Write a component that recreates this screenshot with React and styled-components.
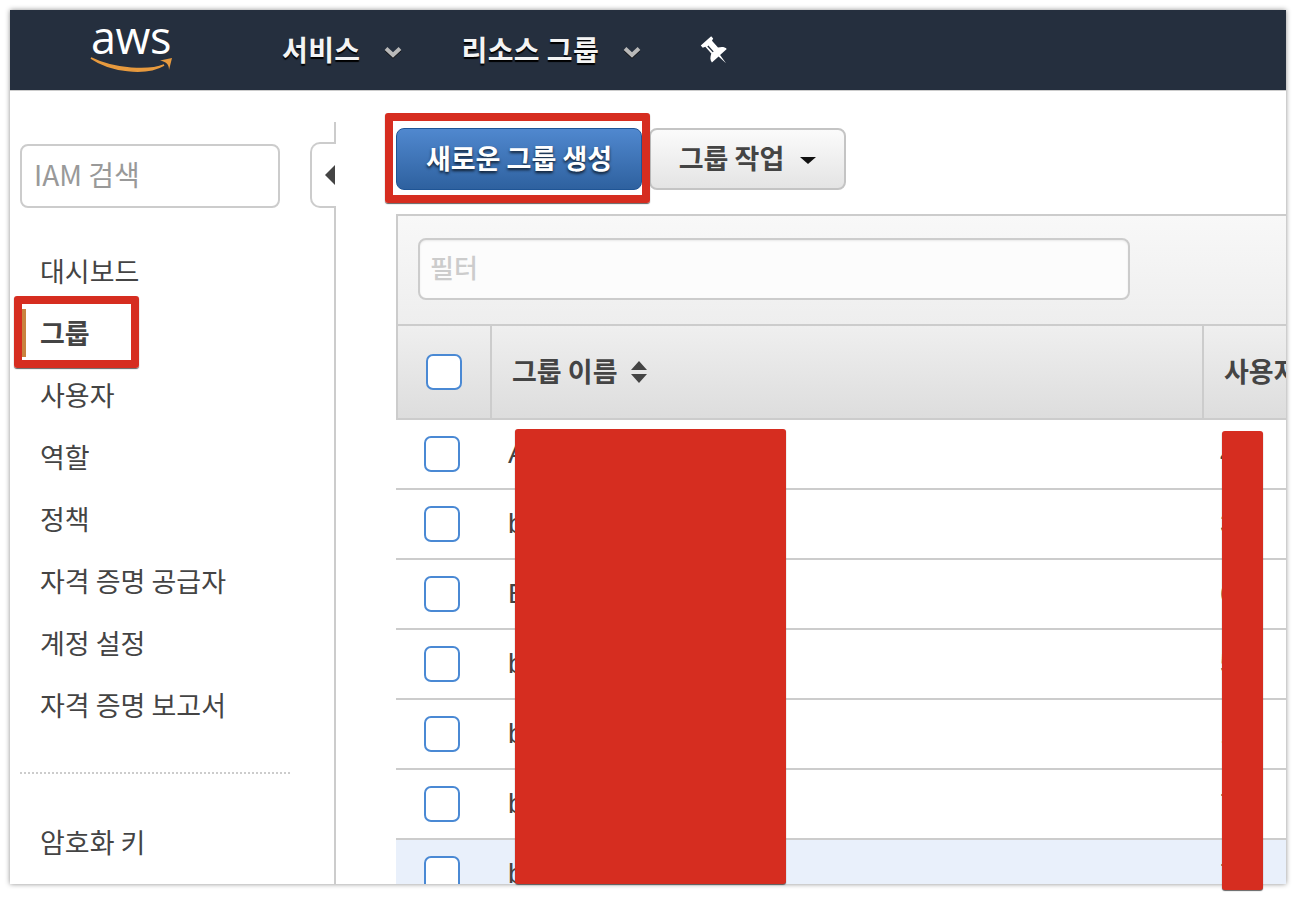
import React from 'react';
import styled, { createGlobalStyle } from 'styled-components';

const GlobalStyle = createGlobalStyle`
  html, body {
    margin: 0;
    background: #fff;
    font-family: "Noto Sans CJK KR", "Liberation Sans", sans-serif;
    color: #444;
  }
  * { box-sizing: border-box; }
`;

const Stage = styled.div`
  position: relative;
  width: 1296px;
  height: 904px;
  padding: 10px;
  overflow: hidden;
`;

const Frame = styled.div`
  width: 1276px;
  height: 874px;
  overflow: hidden;
  display: flex;
  flex-direction: column;
  background: #fff;
  box-shadow: 0 0 5px rgba(0, 0, 0, 0.45);
`;

const TopBar = styled.header`
  flex: none;
  height: 81px;
  display: flex;
  align-items: center;
  background: #252f3e;
  border-bottom: 1px solid #ccc;
`;

const Logo = styled.div`
  width: 272px;
  padding-left: 80px;
  display: flex;
  flex-direction: column;
  height: 80px;
`;

const LogoWord = styled.span`
  font-family: "Open Sans", sans-serif;
  font-size: 45px;
  line-height: 36px;
  margin-top: 9px;
  margin-left: 1px;
  letter-spacing: -0.5px;
  color: #fff;
`;

const NavItem = styled.div`
  display: flex;
  align-items: center;
  gap: 24px;
  margin-right: ${p => p.$gap}px;
  padding-bottom: 2px;
  font-size: 28px;
  font-weight: 700;
  letter-spacing: 0.4px;
  color: #f4f4f4;
  text-shadow: 0 2px 1px #000;
`;

const Chevron = styled.svg`
  width: 18px;
  height: 12px;
  margin-top: 5px;
  filter: drop-shadow(0 1px 0 #111);
`;

const Pin = styled.svg`
  width: 30px;
  height: 32px;
  margin-top: 3px;
  transform: rotate(-42deg);
`;

const Body = styled.div`
  flex: 1;
  min-height: 0;
  display: flex;
`;

const Sidebar = styled.aside`
  position: relative;
  flex: none;
  width: 326px;
  padding: 53px 0 0 10px;
  &::after {
    content: '';
    position: absolute;
    top: 31px;
    bottom: 0;
    right: 0;
    width: 2px;
    background: #ccc;
  }
`;

const Search = styled.div`
  width: 260px;
  height: 64px;
  margin-bottom: 32px;
  padding: 0 0 4px 12px;
  display: flex;
  align-items: center;
  border: 2px solid #ccc;
  border-radius: 8px;
  font-size: 28px;
  color: #999;
`;

const CollapseTab = styled.div`
  position: absolute;
  z-index: 1;
  top: 51px;
  right: 0;
  width: 26px;
  height: 66px;
  padding-left: 13px;
  display: flex;
  align-items: center;
  background: #fff;
  border: 2px solid #ccc;
  border-right: 0;
  border-radius: 10px 0 0 10px;
  &::before {
    content: '';
    border-style: solid;
    border-width: 10px 10px 10px 0;
    border-color: transparent #444 transparent transparent;
  }
`;

const NavList = styled.nav`
  display: flex;
  flex-direction: column;
`;

const SideItem = styled.div`
  height: 62px;
  padding: 0 0 1px 20px;
  display: flex;
  align-items: center;
  font-size: 27px;
  font-weight: ${p => (p.$active ? 700 : 400)};
  color: #444;
  position: relative;
  &::before {
    content: ${p => (p.$active ? "''" : 'none')};
    position: absolute;
    left: 2px;
    top: 7px;
    width: 4px;
    height: 48px;
    background: #c9833f;
  }
`;

const Divider = styled.div`
  width: 270px;
  margin: 36px 0 37px;
  border-top: 2px dotted #ccc;
`;

const Main = styled.main`
  flex: 1;
  min-width: 0;
  padding: 37px 0 0 60px;
`;

const Toolbar = styled.div`
  display: flex;
  gap: 7px;
  margin-bottom: 24px;
`;

const PrimaryButton = styled.div`
  width: 246px;
  height: 62px;
  padding-bottom: 4px;
  display: flex;
  align-items: center;
  justify-content: center;
  border: 1px solid #1f5596;
  border-radius: 8px;
  background: linear-gradient(#5088cf, #2e619f);
  color: #fff;
  font-size: 27px;
  font-weight: 700;
  text-shadow: 0 2px 3px rgba(0, 0, 0, 0.75);
`;

const ActionButton = styled.div`
  width: 197px;
  height: 62px;
  padding-bottom: 4px;
  display: flex;
  align-items: center;
  justify-content: center;
  gap: 16px;
  border: 2px solid #c4c4c4;
  border-radius: 8px;
  background: linear-gradient(#fbfbfb, #e4e4e4);
  color: #444;
  font-size: 27px;
  font-weight: 700;
  &::after {
    content: '';
    margin-top: 6px;
    border-style: solid;
    border-width: 7px 8px 0;
    border-color: #111 transparent transparent;
  }
`;

const Table = styled.section`
  border-top: 2px solid #ccc;
  border-left: 2px solid #ccc;
`;

const FilterBar = styled.div`
  height: 108px;
  padding: 22px 0 0 20px;
  background: linear-gradient(#f8f8f8, #eee);
`;

const FilterInput = styled.div`
  width: 712px;
  height: 62px;
  padding: 0 0 6px 10px;
  display: flex;
  align-items: center;
  background: #fcfcfc;
  border: 2px solid #ccc;
  border-radius: 8px;
  box-shadow: inset 0 1px 2px rgba(0, 0, 0, 0.08);
  font-size: 26px;
  font-weight: 500;
  color: #ccc;
`;

const HeadRow = styled.div`
  height: 96px;
  display: grid;
  grid-template-columns: 94px 712px 1fr;
  border-top: 2px solid #ccc;
  border-bottom: 2px solid #ccc;
  background: linear-gradient(#efefef, #ddd);
`;

const HeadCell = styled.div`
  display: flex;
  align-items: center;
  gap: 12px;
  padding: 0 0 3px 20px;
  border-right: ${p => (p.$last ? '0' : '2px solid #ccc')};
  font-size: 27px;
  font-weight: 700;
  color: #444;
  white-space: nowrap;
  overflow: hidden;
`;

const HeadCheckCell = styled(HeadCell)`
  padding: 0 0 0 28px;
`;

const Check = styled.span`
  flex: none;
  display: block;
  width: 36px;
  height: 36px;
  background: #fff;
  border: 2px solid #4a89d4;
  border-radius: 7px;
`;

const SortIcon = styled.svg`
  width: 18px;
  height: 24px;
  margin-top: 3px;
`;

const Row = styled.div`
  margin-left: -2px;
  height: 70px;
  display: grid;
  grid-template-columns: 112px 712px 1fr;
  align-items: center;
  border-bottom: 2px solid #ccc;
  background: ${p => (p.$selected ? '#e9f0fb' : '#fff')};
  font-family: "Liberation Sans", sans-serif;
  font-size: 28px;
  color: #444;
`;

const RowCheck = styled.div`
  padding-left: 28px;
`;

const Annotation = styled.div`
  position: absolute;
  left: ${p => p.$x}px;
  top: ${p => p.$y}px;
  width: ${p => p.$w}px;
  height: ${p => p.$h}px;
  border: 8px solid #d62d20;
  border-radius: 3px;
  box-shadow: 0 1px 1px rgba(60, 60, 60, 0.8);
`;

const Redaction = styled.div`
  position: absolute;
  left: ${p => p.$x}px;
  top: ${p => p.$y}px;
  width: ${p => p.$w}px;
  height: ${p => p.$h}px;
  background: #d62d20;
  border-radius: 3px;
  box-shadow: 0 1px 1px rgba(60, 60, 60, 0.8);
`;

const sideItems = ['대시보드', '그룹', '사용자', '역할', '정책', '자격 증명 공급자', '계정 설정', '자격 증명 보고서'];

const rows = [
  ['A', '4'],
  ['b', '3'],
  ['E', '6'],
  ['b', '5'],
  ['b', '1'],
  ['b', '7'],
  ['b', '7'],
];

const ChevronIcon = () => (
  <Chevron viewBox="0 0 18 12">
    <path d="M2 2.5 L9 9 L16 2.5" fill="none" stroke="#b9b9b9" strokeWidth="4" />
  </Chevron>
);

export default function App() {
  return (
    <Stage>
      <GlobalStyle />
      <Frame>
        <TopBar>
          <Logo>
            <LogoWord>aws</LogoWord>
            <svg width="84" height="20" viewBox="0 0 84 20">
              <path d="M1 3 C20 16 55 21 74 10 C60 16 25 15 1 3 Z" fill="#e79a3e" stroke="#e79a3e" strokeWidth="1.6" />
              <path d="M70 5.5 L82 3 L79 15 C79 9 76 7 70 5.5 Z" fill="#e79a3e" />
            </svg>
          </Logo>
          <NavItem $gap={59}>서비스<ChevronIcon /></NavItem>
          <NavItem $gap={60}>리소스 그룹<ChevronIcon /></NavItem>
          <Pin viewBox="0 0 30 32">
            <path d="M8 1 H22 V4 L19.5 5 V14 C23 16 25 18 25 21 H16 L15 31 L14 21 H5 C5 18 7 16 10.5 14 V5 L8 4 Z" fill="#fff" />
            <path d="M13 6 V14" stroke="#252f3e" strokeWidth="1.4" />
          </Pin>
        </TopBar>
        <Body>
          <Sidebar>
            <CollapseTab />
            <Search>IAM 검색</Search>
            <NavList>
              {sideItems.map(item => (
                <SideItem key={item} $active={item === '그룹'}>{item}</SideItem>
              ))}
            </NavList>
            <Divider />
            <SideItem>암호화 키</SideItem>
          </Sidebar>
          <Main>
            <Toolbar>
              <PrimaryButton>새로운 그룹 생성</PrimaryButton>
              <ActionButton>그룹 작업</ActionButton>
            </Toolbar>
            <Table>
              <FilterBar>
                <FilterInput>필터</FilterInput>
              </FilterBar>
              <HeadRow>
                <HeadCheckCell><Check /></HeadCheckCell>
                <HeadCell>
                  그룹 이름
                  <SortIcon viewBox="0 0 18 24">
                    <path d="M9 1 L17 10 H1 Z M9 23 L1 14 H17 Z" fill="#444" />
                  </SortIcon>
                </HeadCell>
                <HeadCell $last>사용자</HeadCell>
              </HeadRow>
              {rows.map(([name, count], i) => (
                <Row key={i} $selected={i === rows.length - 1}>
                  <RowCheck><Check /></RowCheck>
                  <span>{name}</span>
                  <span>{count}</span>
                </Row>
              ))}
            </Table>
          </Main>
        </Body>
      </Frame>
      <Annotation $x={385} $y={113} $w={265} $h={90} />
      <Annotation $x={14} $y={296} $w={125} $h={72} />
      <Redaction $x={515} $y={429} $w={271} $h={455} />
      <Redaction $x={1222} $y={431} $w={41} $h={459} />
    </Stage>
  );
}
